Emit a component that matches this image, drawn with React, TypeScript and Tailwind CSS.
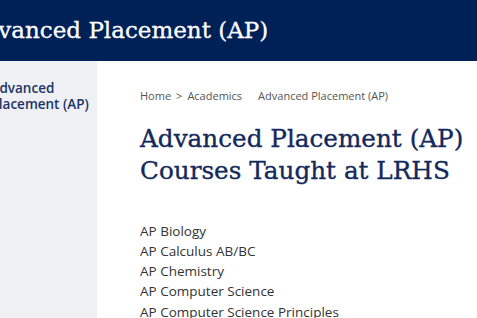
export default function App() {
  const courses = [
    "AP Biology",
    "AP Calculus AB/BC",
    "AP Chemistry",
    "AP Computer Science",
    "AP Computer Science Principles",
  ];

  return (
    <div className="h-[318px] w-[477px] overflow-hidden bg-white">
      <header className="flex h-[61px] items-center bg-[#002157]">
        <h1
          className="ml-[-33px] whitespace-nowrap text-[23px] text-white [-webkit-text-stroke:0.3px_white]"
          style={{ fontFamily: '"DejaVu Serif", serif' }}
        >
          Advanced Placement (AP)
        </h1>
      </header>

      <div className="flex h-[257px]">
        <aside className="w-[97px] shrink-0 bg-[#eef0f4] pt-[19px]">
          <div
            className="ml-[-9.5px] text-[13.5px] font-semibold leading-[16px] text-[#1d3366]"
            style={{ fontFamily: '"Open Sans", sans-serif' }}
          >
            Advanced
            <br />
            Placement (AP)
          </div>
        </aside>

        <main className="pl-[43px] pt-[27px]" style={{ fontFamily: '"Open Sans", sans-serif' }}>
          <nav className="flex whitespace-nowrap text-[11px] text-[#555]">
            <span>Home</span>
            <span className="mx-[5px]">&gt;</span>
            <span>Academics</span>
            <span className="ml-[16px]">Advanced Placement (AP)</span>
          </nav>

          <h2
            className="mt-[18px] whitespace-nowrap text-[24.7px] leading-[32px] text-[#13295b] [-webkit-text-stroke:0.35px_#13295b]"
            style={{ fontFamily: '"DejaVu Serif", serif' }}
          >
            Advanced Placement (AP)
            <br />
            Courses Taught at LRHS
          </h2>

          <ul className="mt-[34px] text-[13.5px] leading-[20.25px] text-[#333]">
            {courses.map((c) => (
              <li key={c} className="whitespace-nowrap">
                {c}
              </li>
            ))}
          </ul>
        </main>
      </div>
    </div>
  );
}
